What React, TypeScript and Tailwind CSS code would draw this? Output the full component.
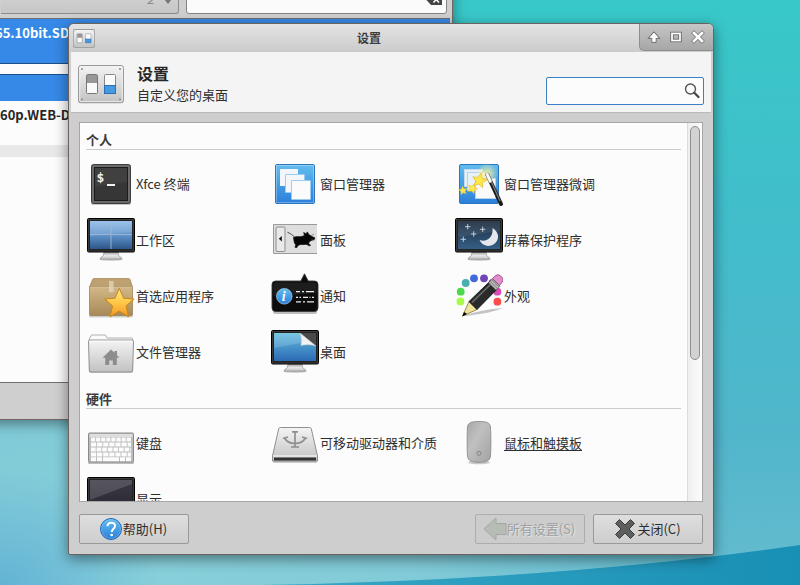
import { useState, type ReactNode } from "react"

function Icon({ children, className = "size-12" }: { children: ReactNode; className?: string }) {
  return (
    <svg viewBox="0 0 48 48" className={`shrink-0 ${className}`} aria-hidden="true">
      {children}
    </svg>
  )
}

// Gradients shared by all of the icons
function IconDefs() {
  return (
    <svg className="absolute size-0" aria-hidden="true">
      <defs>
        <linearGradient id="blue" x2="0" y2="1">
          <stop offset="0" stopColor="#62bdee" />
          <stop offset="1" stopColor="#2b7fda" />
        </linearGradient>
        <linearGradient id="screenBlue" x2="0" y2="1">
          <stop offset="0" stopColor="#8db9e6" />
          <stop offset="0.5" stopColor="#5f93ca" />
          <stop offset="1" stopColor="#2d5689" />
        </linearGradient>
        <linearGradient id="screenDesktop" x2="0" y2="1">
          <stop offset="0" stopColor="#63bde0" />
          <stop offset="1" stopColor="#2b69b4" />
        </linearGradient>
        <linearGradient id="screenNight" x2="0" y2="1">
          <stop offset="0" stopColor="#1d2c3e" />
          <stop offset="1" stopColor="#355f86" />
        </linearGradient>
        <linearGradient id="screenDark" x2="0" y2="1">
          <stop offset="0" stopColor="#3b3944" />
          <stop offset="1" stopColor="#2a2832" />
        </linearGradient>
        <linearGradient id="silver" x2="0" y2="1">
          <stop offset="0" stopColor="#f4f4f4" />
          <stop offset="1" stopColor="#c2c2c2" />
        </linearGradient>
        <linearGradient id="stand" x2="0" y2="1">
          <stop offset="0" stopColor="#a0a0a0" />
          <stop offset="0.5" stopColor="#e8e8e8" />
          <stop offset="1" stopColor="#bdbdbd" />
        </linearGradient>
        <linearGradient id="box" x2="0" y2="1">
          <stop offset="0" stopColor="#d3b88a" />
          <stop offset="1" stopColor="#a78a56" />
        </linearGradient>
        <linearGradient id="gold" x2="0" y2="1">
          <stop offset="0" stopColor="#ffe98a" />
          <stop offset="0.5" stopColor="#ffc848" />
          <stop offset="1" stopColor="#f7952a" />
        </linearGradient>
        <linearGradient id="mouse" x2="1" y2="1">
          <stop offset="0" stopColor="#a8a8a8" />
          <stop offset="0.4" stopColor="#c0c0c0" />
          <stop offset="1" stopColor="#a2a2a2" />
        </linearGradient>
        <radialGradient id="glow">
          <stop offset="0" stopColor="#f7f3a0" />
          <stop offset="1" stopColor="#f7f3a0" stopOpacity="0" />
        </radialGradient>
      </defs>
    </svg>
  )
}

function Monitor({ screen, children }: { screen: string; children?: ReactNode }) {
  return (
    <Icon>
      <ellipse cx="24" cy="43.300" rx="12" ry="1.600" fill="#000" opacity="0.18" />
      <path d="M17 36h14c.3 3.500 1 4.500 3.500 5.800v1.400h-21v-1.400c2.500-1.300 3.200-2.300 3.500-5.800z" fill="url(#stand)" stroke="#8c8c8c" strokeWidth="0.7" />
      <rect x="0.500" y="2.500" width="47" height="33.500" rx="1.200" fill="#232323" stroke="#000" />
      <rect x="1.500" y="3.500" width="45" height="31.500" fill="none" stroke="#4a4a4a" strokeWidth="0.6" />
      <rect x="3" y="5" width="42" height="28" fill={screen} />
      {children}
    </Icon>
  )
}

const TerminalIcon = (
  <Icon>
    <rect x="4" y="42" width="40" height="3" rx="1.500" fill="#000" opacity="0.2" />
    <rect x="4.500" y="4.500" width="39" height="39" rx="2" fill="#6b6b6b" stroke="#3c3c3c" />
    <rect x="7.500" y="7.500" width="33" height="33" fill="#363636" stroke="#1c1c1c" />
    <path d="M8 8h32v14L8 27z" fill="#fff" opacity="0.05" />
    <text x="9.500" y="22" fontSize="13" fontWeight="700" fontFamily="DejaVu Sans Mono, monospace" fill="#f2f2f2">$</text>
    <rect x="20" y="24" width="8" height="2" fill="#f2f2f2" />
  </Icon>
)

const WindowsIcon = (
  <Icon>
    <rect x="4.500" y="4.500" width="39" height="39" rx="1.500" fill="url(#blue)" stroke="#2c76bb" />
    <rect x="5.500" y="5.500" width="37" height="37" fill="none" stroke="#fff" opacity="0.3" />
    <rect x="9" y="9" width="18" height="17" rx="0.5" fill="#f3f7fb" />
    <rect x="14.500" y="14.500" width="19" height="18" rx="0.5" fill="#f3f7fb" stroke="#9ccbf0" />
    <rect x="20.500" y="20.500" width="19" height="19" rx="0.5" fill="#fbfbfb" stroke="#9ccbf0" />
  </Icon>
)

const STAR = "M0-10 2.900-3.600 9.800-3 4.600 1.700 6.200 8.600 0 5-6.200 8.600-4.600 1.700-9.800-3-2.900-3.600z"

const TweaksIcon = (
  <Icon>
    <rect x="4.500" y="4.500" width="39" height="39" rx="1.500" fill="url(#blue)" stroke="#2c76bb" />
    <rect x="9.500" y="9.500" width="18" height="17" fill="#e6eef6" stroke="#c5daec" />
    <rect x="12.500" y="12.500" width="19" height="18" fill="#e9f1f8" stroke="#b5d2ea" />
    <rect x="20.500" y="18.500" width="20" height="20" fill="#fafafa" stroke="#b5d2ea" />
    <circle cx="32" cy="14" r="11" fill="url(#glow)" />
    <g fill="#ffe748" stroke="#e0b42a" strokeWidth="0.8">
      <path d={STAR} transform="translate(24.500 20.500) rotate(12) scale(.75)" />
      <path d={STAR} transform="translate(17.500 28.500) rotate(20) scale(.52)" />
      <path d={STAR} transform="translate(8 30.500) rotate(-8) scale(.44)" />
    </g>
    <path d="M32.500 15 46 44" stroke="#1b1b1b" strokeWidth="4" strokeLinecap="round" />
    <path d="M36.500 22 45 41" stroke="#808080" strokeWidth="1.200" />
    <path d="m32.200 14.500 3 6.500" stroke="#999" strokeWidth="4" strokeLinecap="round" />
    <path d="m32.200 14.500 3 6.500" stroke="#f8f8f8" strokeWidth="2.800" strokeLinecap="round" />
  </Icon>
)

const WorkspacesIcon = (
  <Monitor screen="url(#screenBlue)">
    <path d="M3 5h42v11L3 20z" fill="#fff" opacity="0.12" />
    <path d="M24 5v28M3 18.500h42" stroke="#9db9d6" strokeWidth="0.9" />
  </Monitor>
)

const PanelIcon = (
  <Icon>
    <path d="M46 8.500H2.500v29H46" fill="#dedede" stroke="#9a9a9a" />
    <rect x="5" y="11" width="9" height="24.500" rx="1" fill="#e9e9e9" stroke="#8d8d8d" />
    <path d="M10.800 20v5.400L7.800 22.700z" fill="#111" />
    <path d="M16.500 16.300c3 1.200 5 2.700 7 4.700" fill="none" stroke="#222" strokeWidth="0.8" />
    <path d="M22.500 21.500c2-1.500 5-.5 8-1l3-1-.8-3 2.400 1.400 1.200-2 1.500 2.600 3 2 3 1.300-.6 1.700-3 1-1.600 1-1.200 2 2.200 1.700-1 .6-3.400-1.500-3.500.3-2-.2-2.800 1-1 2.100-2-.3 1-2.200-1.500-2.200z" fill="#050505" stroke="#050505" strokeWidth="0.7" />
    <path d="m39 20 4-1.800M39.500 23l4 1" stroke="#444" strokeWidth="0.5" />
  </Icon>
)

const ScreensaverIcon = (
  <Monitor screen="url(#screenNight)">
    <path d="M3 5h42v10L3 21z" fill="#fff" opacity="0.08" />
    <path d="M37.500 12c7 4 7.500 12.500 1 16.500-6 3.200-12 .5-13.900-4.400 7 2.400 14-2.500 12.900-12.100z" fill="#e4e8ec" />
    <path
      d="M12.700 8v5.400M10 10.700h5.400M27.700 10.600V16M25 13.300h5.400M18.700 15.300v5.400M16 18h5.400M8.300 20.600V26M5.600 23.300H11"
      stroke="#dfe7ef"
      strokeWidth="0.8"
    />
  </Monitor>
)

const PreferredAppsIcon = (
  <Icon>
    <rect x="2" y="42.500" width="44" height="3" rx="1.500" fill="#000" opacity="0.18" />
    <rect x="2.500" y="14.500" width="43" height="29" rx="1.500" fill="url(#box)" stroke="#95794a" strokeWidth="0.7" />
    <path d="M7 6.500h34.500q1 0 1.500 1l2.500 7.500h-43L5.500 7.500q.5-1 1.500-1z" fill="#bea171" stroke="#9c8051" strokeWidth="0.7" />
    <path d="M3 15.300h42" stroke="#e3cda4" strokeWidth="0.8" />
    <path d="M22 9h4.500v11.500l-1.100-.8-1.100.8-1.100-.8-1.200.8z" fill="#e6dcc6" opacity="0.7" />
    <path d={STAR} transform="translate(32.300 31.600) scale(1.480 1.520)" fill="url(#gold)" stroke="#c58a20" strokeWidth="0.7" strokeLinejoin="round" />
  </Icon>
)

const NotifyIcon = (
  <Icon>
    <rect x="2" y="38" width="44" height="4" rx="2" fill="#000" opacity="0.25" />
    <path d="M4.500 9h25.300l3.700-7.200L37.200 9h6.300Q47 9 47 12.500v23.300q0 3.700-3.500 3.700h-39Q1 39.500 1 35.800V12.500Q1 9 4.500 9z" fill="#0c0c0c" stroke="#3b3b3b" strokeWidth="0.9" />
    <path d="M2.500 24V13q0-2.500 2.500-2.500h38q2.500 0 2.500 2.500v8z" fill="#fff" opacity="0.07" />
    <circle cx="13.300" cy="24.300" r="7.800" fill="url(#blue)" stroke="#a9d5f2" strokeWidth="0.7" />
    <text x="10.700" y="29.200" fontSize="14" fontStyle="italic" fontWeight="700" fontFamily="Liberation Serif, serif" fill="#fff">i</text>
    <path d="M25 19.700h4m2 0h2m2 0h8M25 25.300h2m1.500 0H30m2 0h5m1.500 0h1m1.500 0h2M25 29.800h5m2 0h2m2 0h7" stroke="#ededed" strokeWidth="1.300" />
  </Icon>
)

const AppearanceIcon = (
  <Icon>
    <path d="M10 43c10-3 24-6 38-7-6 3-20 6-38 8z" fill="#000" opacity="0.22" />
    <circle cx="5.400" cy="29.400" r="3.900" fill="#a8fb46" />
    <circle cx="5.700" cy="19.700" r="3.900" fill="#4bd94d" />
    <circle cx="10.700" cy="11" r="3.900" fill="#49aeb0" />
    <circle cx="19" cy="6.300" r="3.900" fill="#4069dc" />
    <circle cx="29" cy="6.300" r="3.900" fill="#7046b7" />
    <circle cx="37.500" cy="11" r="3.900" fill="#8c3aa0" />
    <circle cx="42.400" cy="19.700" r="3.900" fill="#de49b5" />
    <circle cx="42.400" cy="29.700" r="3.900" fill="#fd4b4b" />
    <path d="m14 29.500 8 8L7.500 44z" fill="#f0e29a" stroke="#8b7430" strokeWidth="0.8" />
    <path d="m9 40 3 2-4.700 2.500z" fill="#000" />
    <path d="m14 29.500 21-20.300 7.500 7.500L22 37.500z" fill="#2a2a2a" stroke="#0b0b0b" strokeWidth="0.8" />
    <path d="m17 30.500 20-19.500" stroke="#6d6d6d" strokeWidth="1.600" />
    <path d="m33.500 10.700 4-4 7.500 7.500-4 4z" fill="#b5b5b5" stroke="#555" strokeWidth="0.7" />
    <path d="m35 9.200 7.500 7.500M36.700 7.800l7.200 7.200" stroke="#666" strokeWidth="0.6" />
    <path d="m37.500 6.500 3-2.900q2.500-2 5 .2l1.500 1.600q2.200 2.500.2 4.600l-2.700 3.500z" fill="#e08fcb" stroke="#8e3f7c" strokeWidth="0.8" />
  </Icon>
)

const FolderIcon = (
  <Icon>
    <path d="M2.500 44V10.500L4.500 7h14l1.500 3h24.500q1 0 1 1v33z" fill="#fafafa" stroke="#a8a8a8" strokeWidth="0.9" />
    <path d="M1.500 13.500q-.2-1.500 1.200-1.500h42.600q1.400 0 1.200 1.500L45.700 42.500q-.2 1.500-1.700 1.500H4q-1.500 0-1.700-1.500z" fill="url(#silver)" stroke="#878787" strokeWidth="0.9" />
    <path d="M3 13.200h42" stroke="#fff" strokeWidth="0.9" />
    <path d="m24 21.500 3.500 3.300V23H30v4.200l2.500 2.600h-2.700V37h-4v-4.500h-3.600V37h-4v-7.200h-2.700z" fill="#8d8d8d" />
  </Icon>
)

const DesktopIcon = (
  <Monitor screen="url(#screenDesktop)">
    <path d="M3 5h27v10L3 20z" fill="#fff" opacity="0.15" />
    <path d="M29 5h16v13z" fill="#4a4a4a" />
    <path d="M29 5c1.500 4 1.500 8 1 12.500 5-1.300 10-1 15 .5z" fill="#f1f1f1" stroke="#c2c2c2" strokeWidth="0.5" />
  </Monitor>
)

const KeyboardIcon = (
  <Icon>
    <rect x="1" y="42.500" width="46" height="2.500" rx="1" fill="#000" opacity="0.25" />
    <rect x="1.500" y="14" width="45" height="29" rx="1.200" fill="#bdbdbd" stroke="#8a8a8a" />
    <path d="M2.500 15h43v3h-43z" fill="#dedede" />
    <g stroke="#fcfcfc" strokeWidth="4">
      <path d="M4 20.500h40" strokeDasharray="4.200 0.900" />
      <path d="M4 25.500h40" strokeDasharray="5.200 0.900" />
      <path d="M4 30.500h40" strokeDasharray="4.700 0.900" />
      <path d="M4 35.500h40" strokeDasharray="5.200 0.900" />
      <path d="M4 40.300h5m1 0h5m1 0h16m1 0h5m1 0h5" />
    </g>
  </Icon>
)

const DriveIcon = (
  <Icon>
    <rect x="2" y="41" width="44" height="3" rx="1.500" fill="#000" opacity="0.2" />
    <path d="M9.500 8.500h29q1.300 0 1.800 1.300L46.500 37v5H1.500v-5L7.700 9.800q.5-1.300 1.800-1.300z" fill="url(#silver)" stroke="#858585" strokeWidth="0.9" />
    <path d="M2 37h44" stroke="#fff" />
    <rect x="3" y="38.500" width="42" height="3" fill="#333" />
    <g fill="none" stroke="#8f8f8f" strokeWidth="1.700">
      <path d="M24 13v15M24 24.500c-5.500 0-8.500-2-10.500-5.500M24 24.500c5.500 0 8.500-2 10.500-5.500M20 28h8" />
      <path d="M21 12.800h6M12 19.500l5-1.500M31 18l5 1.500" />
    </g>
  </Icon>
)

const MouseIcon = (
  <Icon>
    <ellipse cx="24" cy="43.500" rx="11" ry="1.800" fill="#000" opacity="0.2" />
    <path d="M24 2.500c7.500 0 11 1 11.500 5.500.5 8 .5 22 0 29-.5 5-4.500 6.300-11.500 6.300S13 42 12.500 37c-.5-7-.5-21 0-29C13 3.500 16.500 2.500 24 2.500z" fill="url(#mouse)" stroke="#858585" strokeWidth="0.8" />
    <circle cx="24" cy="34.300" r="2" fill="none" stroke="#858585" />
  </Icon>
)

const DisplayIcon = (
  <Monitor screen="url(#screenDark)">
    <path d="M3 5h42v4L3 25z" fill="#fff" opacity="0.14" />
  </Monitor>
)

const sections = [
  {
    title: "个人",
    items: [
      { label: "Xfce 终端", icon: TerminalIcon },
      { label: "窗口管理器", icon: WindowsIcon },
      { label: "窗口管理器微调", icon: TweaksIcon },
      { label: "工作区", icon: WorkspacesIcon },
      { label: "面板", icon: PanelIcon },
      { label: "屏幕保护程序", icon: ScreensaverIcon },
      { label: "首选应用程序", icon: PreferredAppsIcon },
      { label: "通知", icon: NotifyIcon },
      { label: "外观", icon: AppearanceIcon },
      { label: "文件管理器", icon: FolderIcon },
      { label: "桌面", icon: DesktopIcon },
    ],
  },
  {
    title: "硬件",
    items: [
      { label: "键盘", icon: KeyboardIcon },
      { label: "可移动驱动器和介质", icon: DriveIcon },
      { label: "鼠标和触摸板", icon: MouseIcon },
      { label: "显示", icon: DisplayIcon },
    ],
  },
]

function SettingsLogo({ className }: { className: string }) {
  return (
    <svg viewBox="0 0 46 39" className={className} aria-hidden="true">
      <rect x="0.700" y="0.700" width="44.600" height="37" rx="1.800" fill="url(#silver)" stroke="#868686" vectorEffect="non-scaling-stroke" />
      <rect x="1.700" y="1.700" width="42.600" height="35" rx="1" fill="none" stroke="#fff" opacity="0.7" />
      <g fill="#8a8a8a">
        <circle cx="4" cy="4" r="1" />
        <circle cx="42" cy="4" r="1" />
        <circle cx="4" cy="34.500" r="1" />
        <circle cx="42" cy="34.500" r="1" />
      </g>
      <rect x="8.500" y="9.500" width="11" height="19" rx="1" fill="#fafafa" stroke="#777" />
      <rect x="9" y="10" width="10" height="8" fill="#979797" />
      <rect x="26.500" y="9.500" width="11" height="19" rx="1" fill="#fafafa" stroke="#888" />
      <rect x="26.500" y="20.500" width="11" height="8" fill="#469ae0" stroke="#2c6fb4" />
    </svg>
  )
}

function Wallpaper() {
  return (
    <svg viewBox="0 0 800 585" preserveAspectRatio="none" className="absolute inset-0 size-full" aria-hidden="true">
      <defs>
        <linearGradient id="sky" x2="0" y2="1">
          <stop offset="0" stopColor="#38c8c8" />
          <stop offset="0.4" stopColor="#42bdcb" />
          <stop offset="0.75" stopColor="#52b6cb" />
          <stop offset="1" stopColor="#66bccf" />
        </linearGradient>
        <radialGradient id="haze" cx="0.15" cy="1" r="0.75">
          <stop offset="0" stopColor="#88d0da" />
          <stop offset="0.5" stopColor="#86cdd9" stopOpacity="0.85" />
          <stop offset="1" stopColor="#7cc5d5" stopOpacity="0" />
        </radialGradient>
        <radialGradient id="corner" cx="0" cy="1" r="0.2">
          <stop offset="0" stopColor="#5fb0d4" stopOpacity="0.9" />
          <stop offset="1" stopColor="#5fb0d4" stopOpacity="0" />
        </radialGradient>
        <linearGradient id="wave">
          <stop offset="0" stopColor="#3aa8c6" />
          <stop offset="1" stopColor="#188fb5" />
        </linearGradient>
      </defs>
      <rect width="800" height="585" fill="url(#sky)" />
      <rect width="800" height="585" fill="url(#haze)" />
      <rect width="800" height="585" fill="url(#corner)" />
      <path d="M260 585Q560 580 800 545V585z" fill="url(#wave)" />
    </svg>
  )
}

// The download window that sits behind the dialog
function BackWindow() {
  return (
    <section
      aria-label="下载"
      className="absolute -left-5 right-[347px] -top-5 bottom-[165px] flex flex-col border border-[#6f6767] bg-[#cfcfcf] shadow-[0_4px_12px_rgba(0,0,0,0.4)]"
    >
      <div className="flex gap-[7px] pb-1 pl-5 pr-[5px] pt-[3px]">
        <div className="relative h-[30px] w-[178px] shrink-0">
          <select
            aria-label="数量"
            disabled
            className="size-full appearance-none rounded-r-[3px] border border-l-0 border-[#8c8c8c] bg-linear-to-b from-[#d8d8d8] to-[#c6c6c6] pr-6 text-right text-[13px] italic text-[#8a8a8a] [text-align-last:right]"
          >
            <option>2</option>
          </select>
          <svg viewBox="0 0 8 5" className="absolute right-[7px] top-[15px] h-[5px] w-2" aria-hidden="true">
            <path d="M0 0h8L4 5z" fill="#777" />
          </svg>
        </div>
        <div className="relative h-[30px] min-w-0 flex-1">
          <input aria-label="过滤" className="size-full rounded-[3px] border border-[#858585] bg-[#fbfbfb]" />
          <svg viewBox="0 0 16 11" className="absolute right-[5px] top-[10px] h-[11px] w-4" aria-hidden="true">
            <path d="M5 0h11v11H5L0 5.500z" fill="#454545" />
            <path d="m7.500 2.500 5.500 6m0-6-5.500 6" stroke="#fff" strokeWidth="1.500" />
          </svg>
        </div>
      </div>
      <ul className="mr-0.5 flex flex-1 flex-col border-y border-[#6f6f6f] bg-[#fcfcfc] pl-[14px] text-[13px] font-bold leading-5 text-[#262626]">
        <li className="-ml-[14px] h-[45px] border-b border-[#1b4f87] bg-[#3689e6] pl-[14px] pt-1 text-white">65.10bit.SD</li>
        <li className="-ml-[14px] h-[11px] border-b border-[#1b4f87]" />
        <li className="-ml-[14px] h-[26px] bg-[#3689e6]" />
        <li className="h-11 pl-[5px] pt-1">60p.WEB-D</li>
        <li className="-ml-[14px] h-3 bg-[#e8e8e8]" />
      </ul>
      <div className="h-9" />
    </section>
  )
}

function TitleBar() {
  return (
    <div className="flex h-7 shrink-0 items-start rounded-t-[5px] bg-linear-to-b from-[#e4e4e4] to-[#cbcbcb]">
      <SettingsLogo className="ml-1 mt-[5px] h-[19px] w-[22px]" />
      <h1 className="flex-1 pl-1 text-center text-[12px] font-bold leading-7 text-[#3c3c3c]">设置</h1>
      <div className="flex h-[27px] w-[74px] items-center justify-center gap-2 rounded-bl-[5px] rounded-tr-[5px] border-b border-l border-[#8d8d8d] bg-linear-to-b from-[#c6c6c6] to-[#a6a6a6] pr-0.5">
        <button type="button" aria-label="卷起" className="size-[14px]">
          <svg viewBox="0 0 14 14" className="size-full">
            <path d="M7 3 11 7.500H8.300V11.500H5.700V7.500H3z" fill="#fff" stroke="#6b6b6b" strokeWidth="2.400" paintOrder="stroke" />
            <path d="M7 3 11 7.500H8.300V11.500H5.700V7.500H3z" fill="#fff" stroke="#fff" strokeWidth="0.6" />
          </svg>
        </button>
        <button type="button" aria-label="最大化" className="size-[14px]">
          <svg viewBox="0 0 14 14" className="size-full" fill="none">
            <rect x="3" y="3.500" width="8" height="7" stroke="#6b6b6b" strokeWidth="3.500" />
            <rect x="3" y="3.500" width="8" height="7" stroke="#fff" strokeWidth="1.700" />
          </svg>
        </button>
        <button type="button" aria-label="关闭窗口" className="size-[14px]">
          <svg viewBox="0 0 14 14" className="size-full">
            <path d="m3 3 8 8m0-8-8 8" stroke="#777" strokeWidth="4" strokeLinecap="square" />
            <path d="m3 3 8 8m0-8-8 8" stroke="#fff" strokeWidth="2.600" strokeLinecap="square" />
          </svg>
        </button>
      </div>
    </div>
  )
}

const buttonClass =
  "flex h-[30px] w-[110px] items-center justify-center rounded-[2px] border pr-0.5 text-[13px] leading-5 whitespace-nowrap"

export default function App() {
  const [query, setQuery] = useState("")

  return (
    <main className="relative h-screen overflow-hidden bg-[#42bdcb] font-['Noto_Sans_CJK_SC',sans-serif] text-[#2e2e2e]">
      <IconDefs />
      <Wallpaper />
      <BackWindow />

      <div
        role="dialog"
        aria-label="设置"
        className="absolute bottom-[30px] left-[68px] right-[86px] top-[23px] flex flex-col rounded-b-[2px] rounded-t-[6px] border border-[#6b6260] bg-[#cecece] shadow-[0_4px_14px_rgba(0,0,0,0.45)]"
      >
        <TitleBar />

        <header className="mx-0.5 flex h-[61px] shrink-0 items-center border-b border-[#b9b9b9] bg-[#f4f4f4] px-[7px]">
          <SettingsLogo className="mt-1 h-[39px] w-[46px] shrink-0" />
          <div className="ml-[13px] flex-1 pt-px">
            <h2 className="text-base font-bold leading-6 text-[#262626]">设置</h2>
            <p className="text-[13px] leading-5">自定义您的桌面</p>
          </div>
          <div className="relative mt-[18px] h-7 w-[158px]">
            <input
              type="search"
              aria-label="搜索"
              value={query}
              onChange={(e) => setQuery(e.target.value)}
              className="size-full rounded-[2px] border border-[#3a7fc9] bg-[#fcfcfc] pl-2 pr-7 text-[13px] outline-none"
            />
            <svg viewBox="0 0 16 16" className="absolute right-1 top-[6px] size-4" fill="none" aria-hidden="true">
              <circle cx="6.500" cy="6" r="5" stroke="#555" strokeWidth="1.400" />
              <path d="m10.300 9.800 4.200 4.200" stroke="#444" strokeWidth="2.200" strokeLinecap="round" />
            </svg>
          </div>
        </header>

        <div className="mx-[10px] mt-[9px] flex min-h-0 flex-1 border border-[#a6a6a6] bg-[#fcfcfc]">
          <div className="min-w-0 flex-1 overflow-hidden px-[6px] pt-2">
            {sections.map((section) => (
              <section key={section.title} className="mb-[14px]">
                <h3 className="border-b border-[#cccccc] text-[13px] font-bold leading-[18px] text-[#3c3c3c]">{section.title}</h3>
                <ul className="mt-[10px] grid grid-cols-[184px_184px_1fr] gap-y-2 pl-px">
                  {section.items.map((item) => (
                    <li key={item.label}>
                      <button
                        type="button"
                        className={`flex h-12 items-center gap-px text-[13px] leading-5 whitespace-nowrap ${
                          item.label === "鼠标和触摸板" ? "underline underline-offset-2" : ""
                        }`}
                      >
                        {item.icon}
                        {item.label}
                      </button>
                    </li>
                  ))}
                </ul>
              </section>
            ))}
          </div>
          <div className="w-[15px] shrink-0 border-l border-[#dcdcdc] bg-linear-to-r from-[#efefef] to-[#fcfcfc] px-0.5 py-[3px]">
            <div className="h-[63%] rounded-full border border-[#8e8e8e] bg-[#d2d2d2]" />
          </div>
        </div>

        <footer className="flex shrink-0 gap-2 px-[10px] pb-[10px] pt-3">
          <button type="button" className={`${buttonClass} mr-auto border-[#999] bg-linear-to-b from-[#dedede] to-[#cecece]`}>
            <Icon className="size-6">
              <circle cx="24" cy="24" r="21" fill="url(#blue)" stroke="#1e66b5" strokeWidth="2" />
              <circle cx="24" cy="24" r="19" fill="none" stroke="#9fd2f5" strokeWidth="1.500" opacity="0.5" />
              <path d="M17 18.500c0-4.500 3-7 7.500-7s7.500 2.500 7.500 6.500c0 5-6.500 6-6.500 12" fill="none" stroke="#fff" strokeWidth="4" />
              <circle cx="25.300" cy="36" r="2.700" fill="#fff" />
            </Icon>
            帮助(H)
          </button>
          <button
            type="button"
            disabled
            className={`${buttonClass} border-[#adadad] bg-[#cccccc] text-[#a0a0a0] [text-shadow:1px_1px_0_#e2e2e2]`}
          >
            <Icon className="size-6">
              <path d="M2 24 26 2v11h20v22H26v11z" fill="#b7bcb4" stroke="#a3a8a0" strokeWidth="2" strokeLinejoin="round" />
            </Icon>
            所有设置(S)
          </button>
          <button type="button" className={`${buttonClass} border-[#999] bg-linear-to-b from-[#dedede] to-[#cecece]`}>
            <Icon className="size-6">
              <path d="M13 5 24 16 35 5l8 8-11 11 11 11-8 8-11-11-11 11-8-8 11-11L5 13z" fill="#5c5f5c" stroke="#3b3d3b" strokeWidth="2" strokeLinejoin="round" />
            </Icon>
            关闭(C)
          </button>
        </footer>
      </div>
    </main>
  )
}
